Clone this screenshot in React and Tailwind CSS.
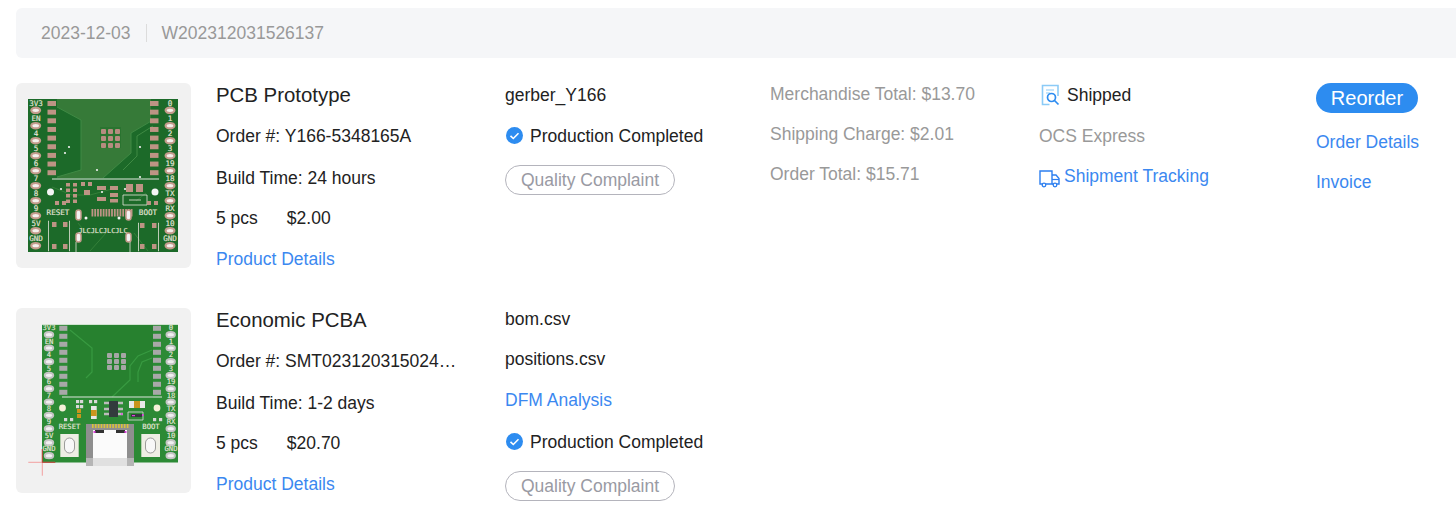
import React from "react";

const LEFT_LABELS = ["3V3", "EN", "4", "5", "6", "7", "8", "9", "5V", "GND"];
const RIGHT_LABELS = ["0", "1", "2", "3", "19", "18", "TX", "RX", "10", "GND"];

const range = (n) => Array.from({ length: n }, (_, i) => i);

const BoardLabel = ({ x, y, size = 7.6, children }) => (
  <text
    x={x}
    y={y}
    fontSize={size}
    textAnchor="middle"
    fill="#e6e6da"
    stroke="#e6e6da"
    strokeWidth="0.15"
    fontFamily="'DejaVu Sans Mono', monospace"
  >
    {children}
  </text>
);

const PcbBare = () => {
  const pinY = [27.3, 42.7, 57.7, 72.7, 87.7, 102.7, 117.7, 132.7, 147.7, 162.7];
  const labelY = [23, 37.7, 52.7, 67.7, 82.7, 97.7, 112.7, 127.7, 142.7, 157.7];
  return (
    <svg width="175" height="185" viewBox="0 0 175 185">
      <rect x="12" y="16" width="150" height="153" fill="#1c6a29" />
      <path d="M41 16h94v79h-94z" fill="#367a38" />
      <path d="M41 24l24 13v50l-24 7z" fill="#1c6a29" />
      <path d="M137 37l-22 13v20l-28 25h50z" fill="#1c6a29" />
      <path d="M41 24l24 13v50l-24 7M137 37l-22 13v20l-28 25M137 43l-16 10v20l-14 14" fill="none" stroke="#3f8a44" strokeWidth="1" />
      <path d="M36 104l20 8 18 0 22-6M90 150l-16 18M118 150l14 18M62 140l8 10h18M120 118l10-8" fill="none" stroke="#348039" strokeWidth="1" />
      <rect x="36" y="95.5" width="107" height="1" fill="#dfe8df" />
      <rect x="84" y="44" width="21" height="21" fill="#2a7430" />
      {range(3).map((r) =>
        range(3).map((c) => (
          <rect key={`${r}-${c}`} x={85 + c * 7} y={46 + r * 7} width="5" height="5" rx="1" fill="#b58c7f" />
        ))
      )}
      {range(9).map((i) => (
        <g key={i}>
          <rect x="31.5" y={18 + i * 8.65} width="8.5" height="5" fill="#bd9484" />
          <rect x="134" y={18 + i * 8.65} width="8.5" height="5" fill="#bd9484" />
        </g>
      ))}
      {pinY.map((y) => (
        <g key={y}>
          <ellipse cx="19.7" cy={y} rx="4.4" ry="2.7" fill="#f4f0ec" stroke="#c49b8c" strokeWidth="2.2" />
          <ellipse cx="154" cy={y} rx="4.4" ry="2.7" fill="#f4f0ec" stroke="#c49b8c" strokeWidth="2.2" />
        </g>
      ))}
      {LEFT_LABELS.map((t, i) => (
        <BoardLabel key={t} x="20" y={labelY[i]}>{t}</BoardLabel>
      ))}
      {RIGHT_LABELS.map((t, i) => (
        <BoardLabel key={t + i} x="154" y={labelY[i]}>{t}</BoardLabel>
      ))}
      <circle cx="34.5" cy="109" r="3.5" fill="#f5f5f5" />
      <circle cx="139" cy="109" r="3.5" fill="#f5f5f5" />
      {[[53, 64], [49, 70], [81, 87], [45, 106], [124, 94], [124, 64], [86, 109], [109, 106]].map(([x, y]) => (
        <circle key={`${x}${y}`} cx={x} cy={y} r="1.1" fill="#f0f0f0" />
      ))}
      {range(4).map((i) => (
        <g key={i}>
          <rect x="50" y={100 + i * 5.5} width="4" height="3.5" fill="#bd9484" />
          <rect x="57" y={100 + i * 5.5} width="4" height="3.5" fill="#bd9484" />
        </g>
      ))}
      <rect x="65" y="99" width="4" height="4" fill="#bd9484" />
      <rect x="72" y="99" width="4" height="4" fill="#bd9484" />
      <rect x="68" y="107" width="6" height="5" fill="#bd9484" />
      <rect x="81" y="103" width="9" height="4" fill="#bd9484" />
      <rect x="94" y="103" width="8" height="4" fill="#bd9484" />
      <rect x="94" y="110" width="8" height="4" fill="#bd9484" />
      <rect x="81" y="114" width="9" height="4" fill="#bd9484" />
      <rect x="94" y="116" width="8" height="3.5" fill="#bd9484" />
      <rect x="110" y="101" width="7" height="8" fill="#bd9484" />
      <rect x="120" y="101" width="7" height="8" fill="#bd9484" />
      <path d="M107 122v-10h24v10zM113 117h12" fill="none" stroke="#e6e6da" strokeWidth="0.8" />
      <rect x="39" y="118" width="4" height="4" fill="#bd9484" />
      <rect x="46" y="118" width="4" height="4" fill="#bd9484" />
      <rect x="131" y="118" width="4" height="4" fill="#bd9484" />
      <rect x="138" y="118" width="4" height="4" fill="#bd9484" />
      {range(15).map((i) => (
        <rect key={i} x={75.5 + i * 2.8} y="126" width="1.8" height="7.5" fill="#bd9484" />
      ))}
      <circle cx="70" cy="135" r="1.5" fill="#f5f5f5" />
      <circle cx="103" cy="135" r="1.5" fill="#f5f5f5" />
      <rect x="60" y="127" width="5" height="10" rx="2.5" fill="#f2f2f2" stroke="#c49b8c" strokeWidth="1.5" />
      <rect x="110" y="127" width="5" height="10" rx="2.5" fill="#f2f2f2" stroke="#c49b8c" strokeWidth="1.5" />
      <rect x="60" y="150" width="5" height="9" rx="2.5" fill="#f2f2f2" stroke="#c49b8c" strokeWidth="1.5" />
      <rect x="110" y="150" width="5" height="9" rx="2.5" fill="#f2f2f2" stroke="#c49b8c" strokeWidth="1.5" />
      <path d="M60 159v10M114 159v10" stroke="#e6e6da" strokeWidth="0.8" />
      <BoardLabel x="42" y="132">RESET</BoardLabel>
      <BoardLabel x="132" y="132">BOOT</BoardLabel>
      <BoardLabel x="87" y="150" size="6.8">JLCJLCJLCJLC</BoardLabel>
      <path d="M33 138h-.5v30h.5M53 138h.5v30h-.5M123 140h-.5v28h.5M142 140h.5v28h-.5" fill="none" stroke="#e6e6da" strokeWidth="0.8" />
      {[[36, 139], [47, 139], [36, 161], [47, 161], [124, 140], [136, 140], [124, 161], [136, 161]].map(([x, y]) => (
        <rect key={`${x}-${y}`} x={x} y={y} width="4.5" height="5" fill="#bd9484" />
      ))}
    </svg>
  );
};

const PcbAssembled = () => {
  const pinY = [26.7, 40, 53.7, 67.3, 80.7, 94, 107.3, 120.7, 134.7, 147.7];
  const labelY = [22.3, 35.6, 49.3, 62.9, 76.3, 89.6, 102.9, 116.3, 130.3, 143.3];
  return (
    <svg width="175" height="185" viewBox="0 0 175 185">
      <rect x="26" y="16" width="136" height="138.5" fill="#2c8a35" />
      <rect x="26" y="16" width="136" height="1" fill="#cfe3cf" />
      <path d="M52 17h85v73h-85z" fill="#27812f" />
      <path d="M54 22l22 18v24l-6 6M136 42l-14 6-8 10v14l-18 17M136 50l-10 4-4 10v10" fill="none" stroke="#389a41" strokeWidth="1.2" />
      <path d="M46 89h100" stroke="#dfe8df" strokeWidth="1" />
      {range(3).map((r) =>
        range(3).map((c) => (
          <rect key={`${r}-${c}`} x={91 + c * 7} y={45 + r * 6} width="5" height="5" rx="1" fill="#a6a6a6" />
        ))
      )}
      {range(9).map((i) => (
        <g key={i}>
          <rect x="43.3" y={17.8 + i * 8} width="8" height="5" fill="#a8a8a8" />
          <rect x="137" y={17.8 + i * 8} width="8" height="5" fill="#a8a8a8" />
        </g>
      ))}
      {pinY.map((y) => (
        <g key={y}>
          <ellipse cx="33" cy={y} rx="4.2" ry="2.6" fill="#f0f0f0" stroke="#c4c4c4" strokeWidth="2" />
          <ellipse cx="154.7" cy={y} rx="4.2" ry="2.6" fill="#f0f0f0" stroke="#c4c4c4" strokeWidth="2" />
        </g>
      ))}
      {LEFT_LABELS.map((t, i) => (
        <BoardLabel key={t} x="33" y={labelY[i]} size="7.2">{t}</BoardLabel>
      ))}
      {RIGHT_LABELS.map((t, i) => (
        <BoardLabel key={t + i} x="155" y={labelY[i]} size="7.2">{t}</BoardLabel>
      ))}
      <circle cx="46.5" cy="100" r="3.4" fill="#f5f0d8" />
      <circle cx="141" cy="100" r="3.4" fill="#f5f0d8" />
      {[[60, 92], [64, 92], [73, 92], [78, 92], [60, 97], [64, 97], [48, 110], [54, 110], [137, 110], [143, 110]].map(([x, y]) => (
        <rect key={`${x}-${y}`} x={x} y={y} width="3.2" height="3.2" fill="#d8d8d8" />
      ))}
      <rect x="61" y="101" width="4" height="4" fill="#c9961e" />
      <rect x="61" y="106" width="4" height="4" fill="#c9961e" />
      <rect x="75" y="98" width="5.7" height="13" fill="#e8e8e8" />
      <rect x="75" y="102" width="5.7" height="6" fill="#c9961e" />
      <path d="M88 95h5M88 101h5M88 106h5M102 95h5M102 101h5M102 106h5" stroke="#bbb" strokeWidth="2.6" />
      <rect x="93" y="93" width="9" height="16" fill="#333b3d" />
      <rect x="113" y="93" width="16" height="7" fill="#e9e9e9" />
      <rect x="118" y="93" width="6" height="7" fill="#c9961e" />
      <path d="M112 104h15v8h-15z" fill="none" stroke="#ddd" strokeWidth="0.8" />
      <rect x="115" y="106" width="11" height="3" fill="#333b3d" />
      <rect x="116" y="107" width="3" height="1.2" fill="#e040e0" />
      <rect x="126" y="106" width="1.6" height="2" fill="#e040e0" />
      <rect x="105" y="105.2" width="1.6" height="1.6" fill="#e040e0" />
      <BoardLabel x="53.5" y="121" size="7.2">RESET</BoardLabel>
      <BoardLabel x="135" y="121" size="7.2">BOOT</BoardLabel>
      <rect x="44.3" y="126" width="18.4" height="23" fill="#eeeee4" />
      <rect x="125.3" y="126" width="18.7" height="23" fill="#eeeee4" />
      <rect x="48.5" y="130" width="10" height="15" rx="5" fill="#f8f8f8" stroke="#777" strokeWidth="0.7" />
      <rect x="129.5" y="130" width="10" height="15" rx="5" fill="#f8f8f8" stroke="#777" strokeWidth="0.7" />
      <rect x="70" y="116" width="48" height="42" fill="#8f8f8f" />
      <rect x="77" y="122" width="34" height="36" fill="#fbfbfb" />
      <rect x="70" y="150" width="48" height="8" fill="#cfcfcf" opacity="0.6" />
      {range(13).map((i) => (
        <rect key={i} x={76 + i * 2.9} y="116" width="1.6" height="4" fill="#d9c23a" />
      ))}
      <rect x="79" y="122" width="9" height="3" fill="#333" />
      <rect x="100" y="122" width="9" height="3" fill="#333" />
      <rect x="77.5" y="123" width="2" height="2" fill="#e040e0" />
      <rect x="108.5" y="123" width="2" height="2" fill="#e040e0" />
      <path d="M12.3 154.3h26.7M26.3 141v26.7" stroke="#f28a8a" strokeWidth="0.8" />
      <path d="M26.3 141v13.3h13" stroke="#a8301f" strokeWidth="0.8" fill="none" />
    </svg>
  );
};

const CheckBadge = () => (
  <svg width="19" height="19" viewBox="0 0 19 19" className="shrink-0">
    <circle cx="9.5" cy="9.5" r="8.5" fill="#2d8cf0" />
    <path d="M5.5 9.8l2.8 2.7 5.2-5.2" fill="none" stroke="#fff" strokeWidth="1.6" />
  </svg>
);

const ShippedIcon = () => (
  <svg width="19" height="22" viewBox="0 0 19 22" fill="none" className="shrink-0">
    <path d="M17 12V1.5H1.5v19h7" stroke="#8ccbf7" strokeWidth="1.6" />
    <path d="M5 6h8M5 9h4" stroke="#8ccbf7" strokeWidth="1.2" />
    <circle cx="10.5" cy="13.5" r="4" stroke="#2d8cf0" strokeWidth="1.7" />
    <path d="M13.5 16.5l4 4" stroke="#2d8cf0" strokeWidth="1.7" />
  </svg>
);

const TruckIcon = () => (
  <svg width="21" height="18" viewBox="0 0 21 18" fill="none" className="shrink-0 mt-[5px]">
    <path d="M3.5 14H1V1h12v13H7" stroke="#2d7ff0" strokeWidth="1.4" />
    <path d="M13 5h4l3 3.5V14h-2M13 14h1" stroke="#2d7ff0" strokeWidth="1.4" />
    <path d="M13 9.5h7" stroke="#2d7ff0" strokeWidth="1.2" />
    <circle cx="5" cy="15" r="1.8" stroke="#2d7ff0" strokeWidth="1.3" />
    <circle cx="16" cy="15" r="1.8" stroke="#2d7ff0" strokeWidth="1.3" />
  </svg>
);

const Line = ({ className = "", children }) => (
  <div className={`h-[40.5px] flex items-center whitespace-nowrap ${className}`}>{children}</div>
);

const Status = ({ className = "" }) => (
  <Line className={`gap-[6px] ${className}`}>
    <CheckBadge />
    <span>Production Completed</span>
  </Line>
);

const ComplaintButton = ({ className = "" }) => (
  <Line className={className}>
    <button className="h-[30px] w-[170px] rounded-full border border-[#b4b4bc] text-[#999aa3] text-[17.5px] leading-none">
      Quality Complaint
    </button>
  </Line>
);

const ProductInfo = ({ title, order, build, price }) => (
  <div className="w-[289px] shrink-0">
    <Line className="text-[20.4px]">{title}</Line>
    <Line>Order #: {order}</Line>
    <Line className="mt-[2px]">Build Time: {build}</Line>
    <Line className="gap-[29px] -mt-px">
      <span>5 pcs</span>
      <span>{price}</span>
    </Line>
    <Line className="text-[#3b88f0] mt-px">Product Details</Line>
  </div>
);

const App = () => {
  return (
    <div className="w-[1456px] h-[516px] overflow-hidden bg-white pt-2 pl-4 text-[17.5px] text-[#222] font-['Liberation_Sans',Arial,sans-serif]">
      <div className="h-[50px] bg-[#f5f6f8] rounded-l-md flex items-center pl-[25px] text-[#999]">
        <span>2023-12-03</span>
        <span className="w-px h-[18px] bg-[#dcdcdc] mx-[15px]"></span>
        <span>W202312031526137</span>
      </div>

      <div className="flex mt-[25px] h-[225px]">
        <div className="w-[175px] h-[185px] rounded-md bg-[#f1f1f1] shrink-0">
          <PcbBare />
        </div>
        <div className="flex pl-[25px] -mt-2">
          <ProductInfo title="PCB Prototype" order="Y166-5348165A" build="24 hours" price="$2.00" />
          <div className="w-[265px] shrink-0">
            <Line>gerber_Y166</Line>
            <Status />
            <ComplaintButton className="mt-[4px]" />
          </div>
          <div className="w-[269px] shrink-0 text-[#999]">
            <Line className="-mt-px">Merchandise Total: $13.70</Line>
            <Line className="-mt-px">Shipping Charge: $2.01</Line>
            <Line>Order Total: $15.71</Line>
          </div>
          <div className="w-[277px] shrink-0">
            <Line className="gap-[7px] ml-[2px]">
              <ShippedIcon />
              <span>Shipped</span>
            </Line>
            <Line className="text-[#999]">OCS Express</Line>
            <Line className="gap-[4px] text-[#3b88f0]">
              <TruckIcon />
              <span>Shipment Tracking</span>
            </Line>
          </div>
          <div className="shrink-0">
            <Line className="mt-[3px]">
              <button className="h-[30px] w-[102px] rounded-full bg-[#2d8cf0] text-white text-[20px] leading-none">
                Reorder
              </button>
            </Line>
            <Line className="text-[#3b88f0] mt-[3px]">Order Details</Line>
            <Line className="text-[#3b88f0]">Invoice</Line>
          </div>
        </div>
      </div>

      <div className="flex">
        <div className="w-[175px] h-[185px] rounded-md bg-[#f1f1f1] shrink-0">
          <PcbAssembled />
        </div>
        <div className="flex pl-[25px] -mt-2">
          <ProductInfo
            title="Economic PCBA"
            order="SMT023120315024…"
            build="1-2 days"
            price="$20.70"
          />
          <div className="w-[265px] shrink-0 -mt-px">
            <Line>bom.csv</Line>
            <Line className="-mt-px">positions.csv</Line>
            <Line className="text-[#3b88f0] mt-px">DFM Analysis</Line>
            <Status className="mt-px" />
            <ComplaintButton className="mt-[4px]" />
          </div>
        </div>
      </div>
    </div>
  );
};

export default App;
